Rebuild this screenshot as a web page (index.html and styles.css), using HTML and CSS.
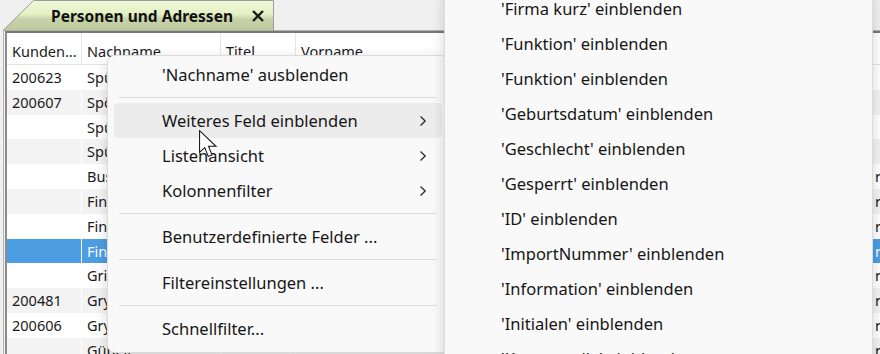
FILE: index.html
```html
<!DOCTYPE html>
<html lang="de">

<head>
    <meta charset="UTF-8">
    <title>Personen und Adressen</title>
    <link rel="stylesheet" href="styles.css">
</head>

<body>

    <div class="app">

        <div class="tabbar">
            <div class="tab">
                <svg class="tab-shape" width="272" height="31" viewBox="0 0 272 31">
                    <defs>
                        <linearGradient id="tabFill" x1="0" y1="0" x2="0" y2="1">
                            <stop offset="0" stop-color="#f0f9d8" />
                            <stop offset="0.45" stop-color="#e4f0c4" />
                            <stop offset="0.6" stop-color="#c8d3aa" />
                            <stop offset="1" stop-color="#bcc79c" />
                        </linearGradient>
                    </defs>
                    <polygon points="0.5,30 30.5,0.5 270.5,0.5 270.5,31 0.5,31" fill="url(#tabFill)" stroke="#9c9c9c" stroke-width="1" />
                </svg>
                <span class="tab-title">Personen und Adressen</span>
                <svg class="tab-close" width="14" height="14" viewBox="0 0 14 14">
                    <path d="M2 2 L12 12 M12 2 L2 12" stroke="#1c1c1c" stroke-width="2.4" fill="none" />
                </svg>
            </div>
        </div>

        <div class="grid">
            <div class="grid-inner">
                <div class="grid-head">
                    <div class="cell">Kunden...</div>
                    <div class="cell">Nachname</div>
                    <div class="cell">Titel</div>
                    <div class="cell">Vorname</div>
                    <div class="cell"></div>
                </div>

                <div class="grid-row">
                    <div class="cell">200623</div><div class="cell">Spühler</div><div class="cell"></div><div class="cell"></div><div class="cell"></div>
                </div>
                <div class="grid-row alt">
                    <div class="cell">200607</div><div class="cell">Spörri</div><div class="cell"></div><div class="cell"></div><div class="cell"></div>
                </div>
                <div class="grid-row">
                    <div class="cell"></div><div class="cell">Spühler</div><div class="cell"></div><div class="cell"></div><div class="cell"></div>
                </div>
                <div class="grid-row alt">
                    <div class="cell"></div><div class="cell">Spühler</div><div class="cell"></div><div class="cell"></div><div class="cell"></div>
                </div>
                <div class="grid-row">
                    <div class="cell"></div><div class="cell">Buser</div><div class="cell"></div><div class="cell"></div><div class="cell">r</div>
                </div>
                <div class="grid-row alt">
                    <div class="cell"></div><div class="cell">Fink</div><div class="cell"></div><div class="cell"></div><div class="cell">r</div>
                </div>
                <div class="grid-row">
                    <div class="cell"></div><div class="cell">Fink</div><div class="cell"></div><div class="cell"></div><div class="cell">r</div>
                </div>
                <div class="grid-row selected">
                    <div class="cell"></div><div class="cell">Fink</div><div class="cell"></div><div class="cell"></div><div class="cell">r</div>
                </div>
                <div class="grid-row">
                    <div class="cell"></div><div class="cell">Gritsch</div><div class="cell"></div><div class="cell"></div><div class="cell">r</div>
                </div>
                <div class="grid-row alt">
                    <div class="cell">200481</div><div class="cell">Gryzlak</div><div class="cell"></div><div class="cell"></div><div class="cell">r</div>
                </div>
                <div class="grid-row">
                    <div class="cell">200606</div><div class="cell">Gryzlak</div><div class="cell"></div><div class="cell"></div><div class="cell">r</div>
                </div>
                <div class="grid-row alt">
                    <div class="cell"></div><div class="cell">Gübeli</div><div class="cell"></div><div class="cell"></div><div class="cell">r</div>
                </div>
            </div>
        </div>

        <!-- Kontextmenü der Kolonne -->
        <div class="menu context-menu">
            <div class="menu-item">'Nachname' ausblenden</div>
            <div class="menu-sep"></div>
            <div class="menu-item hover">Weiteres Feld einblenden
                <svg class="chevron" width="8" height="12" viewBox="0 0 8 12"><path d="M1.5 1.5 L6.2 6 L1.5 10.5" /></svg>
            </div>
            <div class="menu-item">Listenansicht
                <svg class="chevron" width="8" height="12" viewBox="0 0 8 12"><path d="M1.5 1.5 L6.2 6 L1.5 10.5" /></svg>
            </div>
            <div class="menu-item">Kolonnenfilter
                <svg class="chevron" width="8" height="12" viewBox="0 0 8 12"><path d="M1.5 1.5 L6.2 6 L1.5 10.5" /></svg>
            </div>
            <div class="menu-sep"></div>
            <div class="menu-item">Benutzerdefinierte Felder ...</div>
            <div class="menu-sep"></div>
            <div class="menu-item">Filtereinstellungen ...</div>
            <div class="menu-sep"></div>
            <div class="menu-item">Schnellfilter...</div>
        </div>

        <!-- Untermenü "Weiteres Feld einblenden" -->
        <div class="menu sub-menu">
            <div class="menu-item">'Firma kurz' einblenden</div>
            <div class="menu-item">'Funktion' einblenden</div>
            <div class="menu-item">'Funktion' einblenden</div>
            <div class="menu-item">'Geburtsdatum' einblenden</div>
            <div class="menu-item">'Geschlecht' einblenden</div>
            <div class="menu-item">'Gesperrt' einblenden</div>
            <div class="menu-item">'ID' einblenden</div>
            <div class="menu-item">'ImportNummer' einblenden</div>
            <div class="menu-item">'Information' einblenden</div>
            <div class="menu-item">'Initialen' einblenden</div>
            <div class="menu-item">'Kostenstelle' einblenden</div>
        </div>

        <svg class="cursor" width="20" height="28" viewBox="0 0 13.4 20.6">
            <polygon points="0.5,0.5 0.5,16.5 4.3,12.9 6.9,19.4 9.6,18.3 7.1,12 12.6,12" fill="#fff" stroke="#111" stroke-width="0.75" stroke-linejoin="miter" />
        </svg>

    </div>

</body>

</html>
```

FILE: styles.css
```css
body {
    margin: 0;
    font-family: "Noto Sans", sans-serif;
    font-size: 14.5px;
    color: #1a1a1a;
}

.app {
    position: relative;
    width: 880px;
    height: 354px;
    overflow: hidden;
    background-color: #f0f0f0;
}

/* Reiter */

.tabbar {
    height: 30px;
    padding-left: 3px;
}

.tab {
    position: relative;
    width: 271px;
    height: 30px;
    display: flex;
    align-items: center;
}

.tab-shape {
    position: absolute;
    left: 0;
    top: 0;
}

.tab-title {
    position: relative;
    margin-left: 48px;
    margin-top: 1px;
    font-weight: bold;
    font-size: 15.5px;
    color: #111;
}

.tab-close {
    position: relative;
    margin-left: auto;
    margin-right: 9px;
    margin-top: 2px;
}

/* Liste */

.grid {
    margin-left: 3px;
    border-top: 1px solid #b0b0b0;
    border-left: 1px solid #b4b4b4;
    padding-left: 1px;
}

.grid-inner {
    border-top: 2px solid #787878;
    border-left: 2px solid #8c8c8c;
    background-color: #fff;
}

.grid-head,
.grid-row {
    display: grid;
    grid-template-columns: 75px 139px 75px 574px 200px;
}

.grid-head {
    height: 31px;
    border-bottom: 1px solid #e3e3e3;
    background-color: #fff;
}

.grid-head .cell {
    padding: 6px 5px 0;
    border-right: 1px solid #e6e6e6;
    line-height: 24px;
}

.grid-row {
    height: 24.8px;
    background-color: #fff;
}

.grid-row.alt {
    background-color: #f3f3f3;
}

.grid-row .cell {
    padding: 0 5px;
    line-height: 24.8px;
    border-right: 1px solid #fff;
    white-space: nowrap;
    overflow: hidden;
}

.grid-row.selected .cell:nth-child(-n+2),
.grid-row.selected .cell:last-child {
    background-color: #4c9de2;
    color: #fff;
}

/* Menüs */

.menu {
    position: absolute;
    background-color: #f9f9f9;
    border: 1px solid #dcdcdc;
    border-radius: 8px;
    box-shadow: 0 4px 14px rgba(0, 0, 0, 0.16);
    font-size: 16.5px;
    color: #161616;
}

.context-menu {
    left: 107px;
    top: 55px;
    width: 340px;
    padding: 1px 0 6px;
}

.sub-menu {
    left: 444px;
    top: -10px;
    width: 427px;
    padding: 0;
}

.menu-item {
    height: 35px;
    display: flex;
    align-items: center;
    margin: 0 6px;
    padding-left: 48px;
    border-radius: 4px;
    white-space: nowrap;
}

.sub-menu .menu-item {
    padding-left: 50px;
}

.menu-item.hover {
    background-color: #ececec;
}

.chevron {
    margin-left: auto;
    margin-right: 15px;
}

.chevron path {
    fill: none;
    stroke: #2b2b2b;
    stroke-width: 1.3;
}

.menu-sep {
    height: 1px;
    margin: 5px 11px;
    background-color: #dddddd;
}

.cursor {
    position: absolute;
    left: 198px;
    top: 130px;
}
```
